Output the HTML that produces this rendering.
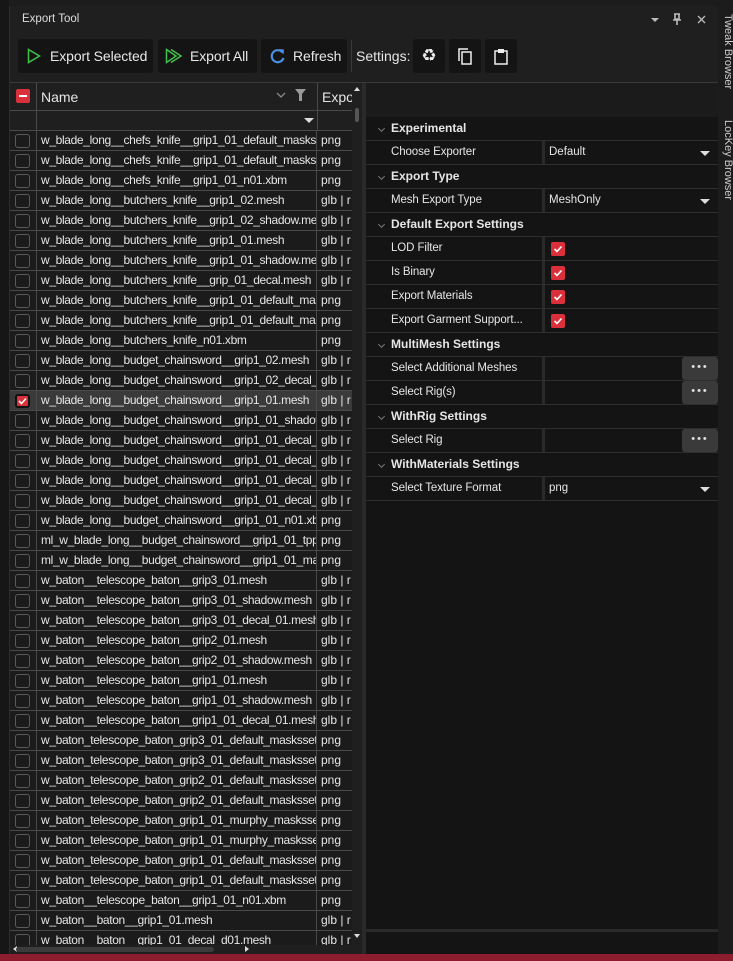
<!DOCTYPE html>
<html><head><meta charset="utf-8"><style>
*{box-sizing:border-box;margin:0;padding:0}
body{width:733px;height:961px;background:#1c1c1c;font-family:"Liberation Sans",sans-serif;color:#e6e6e6;position:relative;overflow:hidden;font-size:12.5px}
.abs{position:absolute}
.btn{position:absolute;top:39px;height:34px;background:#141414;border-radius:3px;display:flex;align-items:center;font-size:14px;color:#e8e8e8;letter-spacing:-0.1px}
.row{position:absolute;left:10px;width:342px;height:20px;border-bottom:1px solid #4a4a4a;background:#1b1b1b}
.row .cb{position:absolute;left:5px;top:3px;width:15px;height:14px;border:1.5px solid #5a5a5a;border-radius:3px}
.row .n{position:absolute;left:26px;top:0;width:281px;height:19px;border-left:1px solid #4a4a4a;border-right:1px solid #4a4a4a;padding-left:4px;line-height:19px;white-space:nowrap;overflow:hidden;font-size:12px;letter-spacing:-0.35px}
.row .e{position:absolute;left:308px;top:0;line-height:19px;padding-left:3px;white-space:nowrap;overflow:hidden;width:34px;font-size:12px}
.sel{background:#3a3a3a}
.pg{position:absolute;left:366px;width:352px;height:24px;border-bottom:1px solid #2e2e2e;background:#141414;line-height:23px}
.pg.h{font-weight:bold;font-size:12px;padding-left:25px}
.pg.h:before{content:"";position:absolute;left:13px;top:9px;width:4px;height:4px;border-right:1px solid #777;border-bottom:1px solid #777;transform:rotate(45deg)}
.pg .k{position:absolute;left:25px;font-size:11.5px;letter-spacing:-0.1px}
.pg .v{position:absolute;left:176px;top:0;width:176px;height:23px;border-left:3px solid #2a2a2a;padding-left:4px;font-size:11.5px}
.chk{position:absolute;left:6px;top:5px;width:14px;height:14px;background:#d9303c;border-radius:2px}
.dd{position:absolute;right:8px;top:10px;width:0;height:0;border-left:5px solid transparent;border-right:5px solid transparent;border-top:5px solid #ddd}
.dots{position:absolute;right:0;top:0;width:36px;height:23px;background:#3a3a3a;border-radius:3px;text-align:center;color:#ddd;font-size:11px;letter-spacing:2px;line-height:21px}
</style></head><body>
<div class="abs" style="left:0;top:0;width:9px;height:954px;background:#161616"></div>
<div class="abs" style="left:9px;top:6px;width:709px;height:948px;background:#1f1f1f;border-left:1px solid #2c2c2c"></div>
<div class="abs" style="left:22px;top:13px;font-size:11.5px;color:#ddd">Export Tool</div>
<div class="abs" style="left:651px;top:18px;border-left:4px solid transparent;border-right:4px solid transparent;border-top:4px solid #bbb"></div>
<svg class="abs" style="left:672px;top:13px" width="10" height="12"><path d="M2 1h6M3 1v5h4V1M1 7h8M5 7v5" stroke="#bbb" stroke-width="1.6" fill="none"/></svg>
<svg class="abs" style="left:697px;top:15px" width="9" height="9"><path d="M1 1L8 8M8 1L1 8" stroke="#bbb" stroke-width="1.3"/></svg>
<div class="abs" style="left:718px;top:6px;width:15px;height:948px;background:#1c1c1c"></div>
<div class="abs" style="left:722px;top:14px;writing-mode:vertical-rl;font-size:11px;color:#ccc">Tweak Browser</div>
<div class="abs" style="left:722px;top:120px;writing-mode:vertical-rl;font-size:11px;color:#ccc">LocKey Browser</div>
<div class="btn" style="left:18px;width:135px"><svg style="margin:0 9px 0 9px" width="14" height="16"><path d="M1.5 1.5L12.5 8L1.5 14.5Z" stroke="#3fc24a" stroke-width="1.5" fill="none"/></svg>Export Selected</div>
<div class="btn" style="left:158px;width:99px"><svg style="margin:0 7px 0 7px" width="18" height="16"><path d="M1.5 1.5L11 8L1.5 14.5Z M6 1.5L16 8L6 14.5" stroke="#3fc24a" stroke-width="1.5" fill="none"/></svg>Export All</div>
<div class="btn" style="left:261px;width:86px"><svg style="margin:0 7px 0 8px" width="17" height="17"><path d="M13.5 4.5A6 6 0 1 0 14.5 10" stroke="#4a8fe0" stroke-width="2.2" fill="none"/><path d="M10 1L15 1.5L14.5 6.5Z" fill="#4a8fe0"/></svg>Refresh</div>
<div class="abs" style="left:351px;top:40px;width:1px;height:32px;background:#3a3a3a"></div>
<div class="abs" style="left:356px;top:48px;font-size:14px">Settings:</div>
<div class="btn" style="left:413px;width:32px;justify-content:center"><span style="font-size:17px;color:#eee">♻</span></div>
<div class="btn" style="left:449px;width:32px;justify-content:center"><svg width="14" height="17"><rect x="4" y="4" width="9" height="12" stroke="#eee" stroke-width="1.5" fill="none"/><path d="M1 13V1h9" stroke="#eee" stroke-width="1.5" fill="none"/></svg></div>
<div class="btn" style="left:485px;width:32px;justify-content:center"><svg width="14" height="17"><rect x="1" y="3" width="12" height="13" stroke="#eee" stroke-width="1.5" fill="none"/><rect x="4" y="1" width="6" height="4" fill="#eee"/></svg></div>
<div class="abs" style="left:10px;top:82px;width:708px;height:1px;background:#3a3a3a"></div>
<div class="abs" style="left:10px;top:83px;width:342px;height:48px;background:#1f1f1f;border-bottom:1px solid #4a4a4a"></div>
<div class="abs" style="left:10px;top:110px;width:342px;height:1px;background:#4a4a4a"></div>
<div class="abs" style="left:36px;top:83px;width:1px;height:48px;background:#4a4a4a"></div>
<div class="abs" style="left:317px;top:83px;width:1px;height:48px;background:#4a4a4a"></div>
<div class="abs" style="left:16px;top:89px;width:14px;height:14px;background:#d9303c;border-radius:2px"><div style="margin:6px 3px;height:2px;background:#fff"></div></div>
<div class="abs" style="left:41px;top:89px;font-size:14px">Name</div>
<svg class="abs" style="left:276px;top:92px" width="10" height="7"><path d="M1 1L5 5L9 1" stroke="#888" stroke-width="1.3" fill="none"/></svg>
<svg class="abs" style="left:295px;top:89px" width="11" height="12"><path d="M0 0H11L7 5V12H4V5Z" fill="#999"/></svg>
<div class="abs" style="left:322px;top:89px;font-size:14px">Expo</div>
<div class="abs" style="left:304px;top:118px;border-left:5px solid transparent;border-right:5px solid transparent;border-top:5px solid #ddd"></div>
<div id="rows"></div>
<div class="abs" style="left:352px;top:83px;width:10px;height:862px;background:#1f1f1f"></div>
<div class="abs" style="left:354px;top:87px;border-left:3px solid transparent;border-right:3px solid transparent;border-bottom:4px solid #ddd"></div>
<div class="abs" style="left:355px;top:108px;width:4px;height:14px;background:#555;border-radius:2px"></div>
<div class="abs" style="left:354px;top:934px;border-left:3px solid transparent;border-right:3px solid transparent;border-top:4px solid #ddd"></div>
<div class="abs" style="left:10px;top:945px;width:352px;height:9px;background:#1f1f1f"></div>
<div class="abs" style="left:13px;top:946px;border-top:3px solid transparent;border-bottom:3px solid transparent;border-right:4px solid #ddd"></div>
<div class="abs" style="left:16px;top:947px;width:198px;height:5px;background:#3c3c3c;border-radius:3px"></div>
<div class="abs" style="left:245px;top:946px;border-top:3px solid transparent;border-bottom:3px solid transparent;border-left:4px solid #ddd"></div>
<div class="abs" style="left:362px;top:83px;width:4px;height:871px;background:#2a2a2a"></div>
<div class="abs" style="left:366px;top:83px;width:352px;height:34px;background:#1b1b1b"></div>
<div class="abs" style="left:366px;top:117px;width:352px;height:812px;background:#141414"></div>
<div id="pg"></div>
<div class="abs" style="left:366px;top:929px;width:352px;height:3px;background:#2a2a2a"></div>
<div class="abs" style="left:366px;top:932px;width:352px;height:22px;background:#141414"></div>
<div class="abs" style="left:0;top:954px;width:733px;height:7px;background:#8c1c2e"></div>
<script>
var names=["w_blade_long__chefs_knife__grip1_01_default_masksset.mlmask","w_blade_long__chefs_knife__grip1_01_default_masksset.mlmask","w_blade_long__chefs_knife__grip1_01_n01.xbm","w_blade_long__butchers_knife__grip1_02.mesh","w_blade_long__butchers_knife__grip1_02_shadow.mesh","w_blade_long__butchers_knife__grip1_01.mesh","w_blade_long__butchers_knife__grip1_01_shadow.mesh","w_blade_long__butchers_knife__grip_01_decal.mesh","w_blade_long__butchers_knife__grip1_01_default_masksset","w_blade_long__butchers_knife__grip1_01_default_masksset","w_blade_long__butchers_knife_n01.xbm","w_blade_long__budget_chainsword__grip1_02.mesh","w_blade_long__budget_chainsword__grip1_02_decal_01.mesh","w_blade_long__budget_chainsword__grip1_01.mesh","w_blade_long__budget_chainsword__grip1_01_shadow.mesh","w_blade_long__budget_chainsword__grip1_01_decal_01.mesh","w_blade_long__budget_chainsword__grip1_01_decal_02.mesh","w_blade_long__budget_chainsword__grip1_01_decal_03.mesh","w_blade_long__budget_chainsword__grip1_01_decal_04.mesh","w_blade_long__budget_chainsword__grip1_01_n01.xbm","ml_w_blade_long__budget_chainsword__grip1_01_tpp.mlmask","ml_w_blade_long__budget_chainsword__grip1_01_masksset","w_baton__telescope_baton__grip3_01.mesh","w_baton__telescope_baton__grip3_01_shadow.mesh","w_baton__telescope_baton__grip3_01_decal_01.mesh","w_baton__telescope_baton__grip2_01.mesh","w_baton__telescope_baton__grip2_01_shadow.mesh","w_baton__telescope_baton__grip1_01.mesh","w_baton__telescope_baton__grip1_01_shadow.mesh","w_baton__telescope_baton__grip1_01_decal_01.mesh","w_baton_telescope_baton_grip3_01_default_maskssets","w_baton_telescope_baton_grip3_01_default_maskssets","w_baton_telescope_baton_grip2_01_default_maskssets","w_baton_telescope_baton_grip2_01_default_maskssets","w_baton_telescope_baton_grip1_01_murphy_maskssets","w_baton_telescope_baton_grip1_01_murphy_maskssets","w_baton_telescope_baton_grip1_01_default_maskssets","w_baton_telescope_baton_grip1_01_default_maskssets","w_baton__telescope_baton__grip1_01_n01.xbm","w_baton__baton__grip1_01.mesh","w_baton__baton__grip1_01_decal_d01.mesh"];
var h="";
names.forEach(function(n,i){var e=/\.mesh$/.test(n)?"glb | r":"png";var s=i==13;
h+='<div class="row'+(s?' sel':'')+'" style="top:'+(131+i*20)+'px'+(i==40?';height:14px;overflow:hidden;border:0':'')+'">'+(s?'<div class="cb" style="background:#d9303c;border-color:#111;border-width:2px"><svg width="11" height="10" style="position:absolute;left:0;top:0"><path d="M2 5L4.5 7.5L9 2.5" stroke="#fff" stroke-width="1.6" fill="none"/></svg></div>':'<div class="cb"></div>')+'<div class="n">'+n+'</div><div class="e">'+e+'</div></div>';});
document.getElementById("rows").innerHTML=h;
var P=[["h","Experimental"],["dd","Choose Exporter","Default"],["h","Export Type"],["dd","Mesh Export Type","MeshOnly"],["h","Default Export Settings"],["c","LOD Filter"],["c","Is Binary"],["c","Export Materials"],["c","Export Garment Support..."],["h","MultiMesh Settings"],["b","Select Additional Meshes"],["b","Select Rig(s)"],["h","WithRig Settings"],["b","Select Rig"],["h","WithMaterials Settings"],["dd","Select Texture Format","png"]];
var g="";
P.forEach(function(p,i){var t=117+i*24;
if(p[0]=="h"){g+='<div class="pg h" style="top:'+t+'px">'+p[1]+'</div>';return;}
var v=p[0]=="dd"?p[2]+'<div class="dd"></div>':p[0]=="c"?'<div class="chk"><svg width="14" height="14"><path d="M3.5 7L6 9.5L10.5 4.5" stroke="#fff" stroke-width="1.6" fill="none"/></svg></div>':'<div class="dots">•••</div>';
g+='<div class="pg" style="top:'+t+'px"><span class="k">'+p[1]+'</span><div class="v">'+v+'</div></div>';});
document.getElementById("pg").innerHTML=g;
</script>
</body></html>
